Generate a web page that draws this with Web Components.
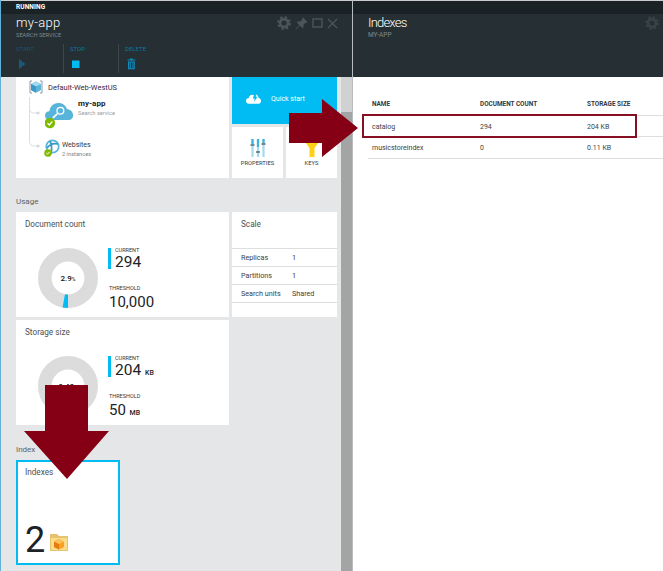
<!DOCTYPE html>
<html>
<head>
<meta charset="utf-8">
<title>my-app</title>
<style>
    html, body { margin: 0; padding: 0; background: #fff; }
    body { font-family: Roboto, "Noto Sans", sans-serif; width: 663px; height: 571px; overflow: hidden; }
</style>
</head>
<body>
<az-portal>
    <az-blade class="main" title-text="my-app" subtitle="SEARCH SERVICE" status="RUNNING" controls>
        <az-command label="START" icon="play" tone="off" first></az-command>
        <az-command label="STOP" icon="stop"></az-command>
        <az-command label="DELETE" icon="trash" last></az-command>
        <az-search-content slot="body"></az-search-content>
    </az-blade>
    <az-blade class="side" title-text="Indexes" subtitle="MY-APP" gear-only>
        <az-index-table slot="body">
            <az-index-row name="catalog" count="294" size="204 KB" selected></az-index-row>
            <az-index-row name="musicstoreindex" count="0" size="0.11 KB"></az-index-row>
        </az-index-table>
    </az-blade>
    <az-arrow dir="right"></az-arrow>
    <az-arrow dir="down"></az-arrow>
</az-portal>

<script>
const ICONS = {
    gear: `<svg width="14" height="14" viewBox="0 0 14 14"><circle cx="7" cy="7" r="3.9" fill="none" stroke="currentColor" stroke-width="2.6"/><circle cx="7" cy="7" r="5.9" fill="none" stroke="currentColor" stroke-width="2" stroke-dasharray="2.4 2.23"/></svg>`,
    pin: `<svg width="13" height="13" viewBox="0 0 13 13"><path fill="currentColor" d="M8 0.5 12.5 5 11.4 6 10.6 5.6 8.4 8 8.4 10.4 7.4 11.2 4.9 8.5 1 12.5 0.5 12 4.4 8 1.8 5.6 2.6 4.6 5 4.6 7.4 2.4 7 1.5Z"/></svg>`,
    square: `<svg width="11" height="10" viewBox="0 0 11 10"><rect x="1" y="1" width="9" height="8" fill="none" stroke="currentColor" stroke-width="1.4"/></svg>`,
    close: `<svg width="11" height="11" viewBox="0 0 11 11"><path d="M1 1 10 10M10 1 1 10" fill="none" stroke="currentColor" stroke-width="1.3"/></svg>`,
    play: `<svg width="9" height="12" viewBox="0 0 9 12"><path fill="#1b5975" d="M1 1 7.500 6 1 11Z"/></svg>`,
    stop: `<svg width="9" height="12" viewBox="0 0 9 12"><rect x="0" y="2.500" width="7.500" height="7.500" fill="#00bcf2"/></svg>`,
    trash: `<svg width="9" height="12" viewBox="0 0 9 12"><path fill="#0f8fc0" d="M0.500 1.600H3V.6H5.800V1.600H8.400V2.600H.5ZM1 3.400H7.800V11.200H1ZM2.300 4.400V10.300H3.200V4.400ZM4 4.400V10.300H4.900V4.400ZM5.600 4.400V10.300H6.500V4.400Z"/></svg>`
};

class AzPortal extends HTMLElement {
    constructor() {
        super();
        this.attachShadow({ mode: 'open' });
        this.shadowRoot.innerHTML = `
            <style>
                :host { display: flex; position: relative; width: 663px; height: 571px; overflow: hidden; }
            </style>
            <slot></slot>
        `;
    }
}

class AzBlade extends HTMLElement {
    constructor() {
        super();
        this.attachShadow({ mode: 'open' });
    }

    connectedCallback() {
        const main = this.hasAttribute('controls');
        const controls = main
            ? `<div class="controls">${ICONS.gear}${ICONS.pin}${ICONS.square}${ICONS.close}</div>`
            : `<div class="controls">${ICONS.gear}</div>`;
        this.shadowRoot.innerHTML = `
            <style>
                :host { display: flex; flex-direction: column; box-sizing: border-box; height: 571px; }
                :host(.main) { width: 353px; border-left: 1px solid #62b1d9; border-right: 1px solid #b9bcbe; background: #e4e6e8; }
                :host(.side) { flex: 1; background: #fff; }
                header { position: relative; box-sizing: border-box; height: 77px; background: #262f33; border-top: 1px solid #c9cbcc; color: #fff; flex: none; }
                .status { height: 13px; background: #1b2226; font-size: 6.5px; font-weight: 700; line-height: 13px; padding-left: 15px; letter-spacing: .1px; }
                :host(.side) .status { padding: 0; }
                .title { font-size: 13px; line-height: 16px; margin: 1px 0 0 15px; font-weight: 300; letter-spacing: .3px; }
                .sub { font-size: 5.7px; line-height: 8px; margin: 0 0 0 15px; color: #7f8a8f; }
                :host(.side) .title { font-size: 13px; letter-spacing: -.8px; }
                :host(.side) .sub { font-size: 6.5px; }
                .commands { display: flex; margin: 5px 0 0 15px; }
                .controls { position: absolute; top: 15px; right: 14px; display: flex; align-items: center; gap: 4px; color: #4b565b; }
                :host(.side) .controls { right: 4px; color: #394347; }
                main { flex: 1; min-height: 0; }
            </style>
            <header>
                <div class="status">${this.getAttribute('status') || ''}</div>
                <div class="title">${this.getAttribute('title-text')}</div>
                <div class="sub">${this.getAttribute('subtitle')}</div>
                <div class="commands"><slot></slot></div>
                ${controls}
            </header>
            <main><slot name="body"></slot></main>
        `;
    }
}

class AzCommand extends HTMLElement {
    constructor() {
        super();
        this.attachShadow({ mode: 'open' });
    }

    connectedCallback() {
        const off = this.getAttribute('tone') === 'off';
        this.shadowRoot.innerHTML = `
            <style>
                :host { display: block; box-sizing: border-box; width: 55px; height: 29px; padding-left: 6px; border-right: 1px solid #3c474c; }
                :host([first]) { width: 48px; padding-left: 0; }
                :host([last]) { border-right: 0; }
                .label { font-size: 6px; line-height: 9px; color: ${off ? '#1b5470' : '#0f77a3'}; }
                .icon { display: flex; margin-top: 5px; height: 12px; margin-left: 2px; }
            </style>
            <div class="label">${this.getAttribute('label')}</div>
            <div class="icon">${ICONS[this.getAttribute('icon')]}</div>
        `;
    }
}

class AzTile extends HTMLElement {
    constructor() {
        super();
        this.attachShadow({ mode: 'open' });
    }

    connectedCallback() {
        const heading = this.getAttribute('heading');
        this.shadowRoot.innerHTML = `
            <style>
                :host { display: flex; flex-direction: column; box-sizing: border-box; background: #fff; height: 105px; padding: 6px 0 0 9px; color: #3a4045; font-size: 8px; }
                .h { font-size: 8.2px; line-height: 12px; color: #4a5055; flex: none; }
            </style>
            ${heading ? `<div class="h">${heading}</div>` : ''}
            <slot></slot>
        `;
    }
}

class AzDonut extends HTMLElement {
    constructor() {
        super();
        this.attachShadow({ mode: 'open' });
    }

    connectedCallback() {
        const pct = parseFloat(this.getAttribute('value'));
        const a = pct / 100 * Math.PI * 2;
        const pt = r => `${(30 - Math.sin(a) * r).toFixed(2)} ${(30 + Math.cos(a) * r).toFixed(2)}`;
        const id = this.getAttribute('value').replace('.', '');
        this.shadowRoot.innerHTML = `
            <style>
                :host { display: block; position: relative; width: 60px; height: 60px; flex: none; }
                svg { display: block; }
                .pct { position: absolute; inset: 0; display: flex; align-items: center; justify-content: center; font-size: 8px; font-weight: 500; color: #111; }
                small { font-size: 5px; color: #333; margin-top: 1px; }
            </style>
            <svg width="60" height="60" viewBox="0 0 60 60">
                <defs>
                    <pattern id="h${id}" width="2" height="2" patternUnits="userSpaceOnUse" patternTransform="rotate(45)">
                        <rect width="2" height="2" fill="#d9d9d9"/><rect width="1" height="2" fill="#dedede"/>
                    </pattern>
                </defs>
                <circle cx="30" cy="30" r="23.2" fill="none" stroke="url(#h${id})" stroke-width="13.6"/>
                <path fill="#00bcf2" d="M30 60 A30 30 0 0 1 ${pt(30)} L${pt(16.5)} A16.5 16.5 0 0 0 30 46.5Z"/>
            </svg>
            <div class="pct">${this.getAttribute('value')}<small>%</small></div>
        `;
    }
}

class AzMetric extends HTMLElement {
    constructor() {
        super();
        this.attachShadow({ mode: 'open' });
    }

    connectedCallback() {
        const unit = this.getAttribute('unit');
        this.shadowRoot.innerHTML = `
            <style>
                :host { display: block; box-sizing: border-box; height: 25px; color: #1c2226; }
                :host([bar]) { border-left: 3px solid #00bcf2; height: 21px; padding-left: 4px; }
                .l { font-size: 5.5px; line-height: 5px; color: #33393d; }
                .v { font-size: 15.5px; line-height: 16px; margin-top: 1px; white-space: nowrap; }
                :host(:not([bar])) .l { padding-left: 1px; }
                :host(:not([bar])) .v { font-size: 15px; line-height: 18px; margin-top: 2px; padding-left: 1px; }
                small { font-size: 7px; font-weight: 500; }
            </style>
            <div class="l">${this.getAttribute('label')}</div>
            <div class="v">${this.getAttribute('value')}${unit ? ` <small>${unit}</small>` : ''}</div>
        `;
    }
}

class AzUsage extends HTMLElement {
    constructor() {
        super();
        this.attachShadow({ mode: 'open' });
    }

    connectedCallback() {
        this.shadowRoot.innerHTML = `
            <style>
                :host { display: block; }
                .row { display: flex; margin: 18px 0 0 13px; }
                .stats { margin-left: 10px; display: flex; flex-direction: column; gap: 17px; }
            </style>
            <div class="row">
                <az-donut value="${this.getAttribute('pct')}"></az-donut>
                <div class="stats">
                    <az-metric bar label="CURRENT" value="${this.getAttribute('current')}" unit="${this.getAttribute('current-unit') || ''}"></az-metric>
                    <az-metric label="THRESHOLD" value="${this.getAttribute('threshold')}" unit="${this.getAttribute('threshold-unit') || ''}"></az-metric>
                </div>
            </div>
        `;
    }
}

class AzScale extends HTMLElement {
    constructor() {
        super();
        this.attachShadow({ mode: 'open' });
    }

    connectedCallback() {
        const rows = [['Replicas', '1'], ['Partitions', '1'], ['Search units', 'Shared']];
        this.shadowRoot.innerHTML = `
            <style>
                :host { display: block; box-sizing: border-box; height: 105px; background: #fff; color: #3a4045; }
                .h { font-size: 8.2px; line-height: 12px; padding: 6px 0 0 9px; height: 36px; box-sizing: border-box; color: #4a5055; }
                .r { display: grid; grid-template-columns: 51px 1fr; height: 18px; box-sizing: border-box; padding-left: 9px; border-top: 1px solid #dcdee0; font-size: 7.2px; line-height: 17px; }
                .r.end { height: 15px; }
            </style>
            <div class="h">Scale</div>
            ${rows.map(r => `<div class="r"><span>${r[0]}</span><span>${r[1]}</span></div>`).join('')}
            <div class="r end"></div>
        `;
    }
}

class AzResourceTree extends HTMLElement {
    constructor() {
        super();
        this.attachShadow({ mode: 'open' });
    }

    connectedCallback() {
        this.shadowRoot.innerHTML = `
            <style>
                :host { display: block; position: relative; box-sizing: border-box; background: #fff; height: 101px; color: #33393d; }
                .group { display: flex; align-items: center; gap: 5px; padding: 3px 0 0 13px; height: 14px; font-size: 7.5px; color: #40283f; }
                .link { position: absolute; left: 13px; top: 20px; }
                .res { display: flex; position: absolute; }
                .res.app { left: 29px; top: 25px; }
                .res.web { left: 28px; top: 62px; }
                .t { font-size: 8px; line-height: 10px; }
                .app .t { font-weight: 700; color: #222; }
                .s { font-size: 5.7px; line-height: 8px; color: #9aa0a4; }
                .web .t { font-size: 7px; }
                .web .s { color: #7d858a; }
                .app .txt { margin: -3px 0 0 4px; }
                .web .txt { margin: 1px 0 0 2px; }
            </style>
            <div class="group">
                <svg width="14" height="14" viewBox="0 0 14 14">
                    <path d="M3 1H1V13H3M11 1H13V13H11" fill="none" stroke="#8d9aa3" stroke-width="1"/>
                    <path d="M7 1.500 12 4V10L7 12.700 2 10V4Z" fill="#59b4d9"/>
                    <path d="M7 1.500 12 4 7 6.500 2 4Z" fill="#a5d9ef"/>
                    <path d="M7 6.500V12.700L2 10V4Z" fill="#3999c6"/>
                </svg>
                <span>Default-Web-WestUS</span>
            </div>
            <svg class="link" width="16" height="52" viewBox="0 0 16 52">
                <path d="M.5 0V44Q.5 49 5 49H8M.5 11Q.5 16 5 16H8" fill="none" stroke="#dcdfe1" stroke-width="1"/>
                <circle cx="9" cy="16" r="1.600" fill="#d5d8da"/><circle cx="9" cy="49" r="1.600" fill="#d5d8da"/>
            </svg>
            <div class="res app">
                <svg width="29" height="29" viewBox="0 0 33 33">
                    <path fill="#59b4d9" d="M5 20.500C1.500 20.500 0 18 0 15.500 0 12.500 2 10.500 5 10.500 5.500 5 10 1 15.500 1 20 1 24 4 25 8 29 8.500 32 11.500 32 15 32 18 30 20.500 26.500 20.500Z"/>
                    <circle cx="17.500" cy="10" r="4.600" fill="#fff"/><circle cx="17.500" cy="10" r="3.100" fill="#59b4d9"/>
                    <path d="M14 13.500 9 18" stroke="#fff" stroke-width="2"/>
                    <circle cx="5.500" cy="24" r="6" fill="#7fba00"/>
                    <path d="M2.800 24 4.900 26.200 8.400 22.200" fill="none" stroke="#fff" stroke-width="1.400"/>
                </svg>
                <div class="txt"><div class="t">my-app</div><div class="s">Search service</div></div>
            </div>
            <div class="res web">
                <svg width="16" height="18" viewBox="0 0 16 18">
                    <circle cx="8.500" cy="7.500" r="6.200" fill="none" stroke="#59b4d9" stroke-width="1.800"/>
                    <path d="M3 9C6 5 10 4 14 5M6 2C8 6 8 10 7 14" fill="none" stroke="#3999c6" stroke-width="1.800"/>
                    <circle cx="4" cy="14" r="3.800" fill="#7fba00"/>
                    <path d="M2.300 14 3.500 15.200 5.700 12.800" fill="none" stroke="#fff" stroke-width="1"/>
                </svg>
                <div class="txt"><div class="t">Websites</div><div class="s">2 instances</div></div>
            </div>
        `;
    }
}

class AzPart extends HTMLElement {
    constructor() {
        super();
        this.attachShadow({ mode: 'open' });
    }

    connectedCallback() {
        this.shadowRoot.innerHTML = `
            <style>
                :host { display: flex; flex-direction: column; align-items: center; box-sizing: border-box; background: #fff; height: 51px; font-size: 5.8px; color: #33393d; padding-top: 12px; }
                .i { height: 18px; display: flex; }
                .l { line-height: 9px; margin-top: 2px; }
            </style>
            <div class="i"><slot></slot></div>
            <div class="l">${this.getAttribute('label')}</div>
        `;
    }
}

class AzSearchContent extends HTMLElement {
    constructor() {
        super();
        this.attachShadow({ mode: 'open' });
    }

    connectedCallback() {
        this.shadowRoot.innerHTML = `
            <style>
                :host { display: flex; height: 494px; overflow: hidden; }
                .scroll { flex: 1; box-sizing: border-box; padding-left: 15px; }
                .bar { width: 11px; flex: none; background: linear-gradient(#cfd1d2 0 35px, #a3a5a5 35px); }
                .grid { display: grid; grid-template-columns: 213px 105px; column-gap: 3px; row-gap: 3px; }
                .side { display: grid; grid-template-columns: 51px 51px; gap: 3px; }
                .quick { grid-column: 1 / 3; box-sizing: border-box; height: 47px; padding: 0 0 4px 14px; background: #00bcf2; color: #fff; display: flex; align-items: center; gap: 10px; font-size: 7px; }
                .label { font-size: 8px; line-height: 12px; color: #5b6266; margin: 18px 0 4px; }
                .label.index { margin-top: 19px; }
                .blank { height: 105px; }
                .indexes { box-sizing: border-box; width: 104px; height: 105px; border: 2px solid #00bcf2; padding: 4px 0 0 7px; }
                .count { display: flex; align-items: flex-end; margin-top: 43px; gap: 5px; height: 38px; }
                .num { font-size: 36px; line-height: 38px; color: #1c2226; }
                .count svg { margin-bottom: 8px; }
            </style>
            <div class="scroll">
                <div class="grid">
                    <az-resource-tree></az-resource-tree>
                    <div class="side">
                        <div class="quick">
                            <svg width="15" height="11" viewBox="0 0 15 11"><path fill="#fff" d="M3 10.800C1.200 10.800 0 9.500 0 7.800 0 6.200 1.200 5 2.800 5 3.200 3 4.600 1.800 6.400 1.800 7 1.800 7.500 2 8 2.200L6.800 5.500 8.600 5.500 8 8.800 11.600 3.800 9.800 3.800 10 1.400C11.500 2 12.500 3.300 12.700 5 14 5.300 15 6.400 15 7.900 15 9.600 13.800 10.800 12 10.800Z"/></svg>
                            <span>Quick start</span>
                        </div>
                        <az-part label="PROPERTIES">
                            <svg width="16" height="18" viewBox="0 0 16 18">
                                <path d="M2.500 0V18M8 0V18M13.500 0V18" stroke="#a5d9ef" stroke-width="2.200"/>
                                <path d="M2.500 0V5M8 0V8M13.500 0V4" stroke="#3eb3e0" stroke-width="2.200"/>
                                <path d="M0.500 6H4.500M6 13H10M11.500 5H15.500" stroke="#5d6a72" stroke-width="1.400"/>
                            </svg>
                        </az-part>
                        <az-part label="KEYS">
                            <svg width="18" height="18" viewBox="0 0 18 18"><path fill="#fcd116" d="M0 0H18L11.500 9V18H6.500V9Z"/></svg>
                        </az-part>
                    </div>
                </div>
                <div class="label">Usage</div>
                <div class="grid">
                    <az-tile heading="Document count">
                        <az-usage pct="2.9" current="294" threshold="10,000"></az-usage>
                    </az-tile>
                    <az-scale></az-scale>
                    <az-tile heading="Storage size">
                        <az-usage pct="0.40" current="204" current-unit="KB" threshold="50" threshold-unit="MB"></az-usage>
                    </az-tile>
                    <div class="blank"></div>
                </div>
                <div class="label index">Index</div>
                <az-tile class="indexes" heading="Indexes">
                    <div class="count">
                        <span class="num">2</span>
                        <svg width="18" height="17" viewBox="0 0 18 17">
                            <path fill="#e5c26d" d="M0 0H7L9 2H18V17H0Z"/>
                            <path fill="#fbdc8c" d="M1 4H17V16H1Z"/>
                            <path fill="#f7a11f" d="M9 5 14 7.500V13L9 15.500 4 13V7.500Z"/>
                            <path fill="#e97a10" d="M9 10V15.500L4 13V7.500Z"/>
                            <path fill="#fbc15a" d="M9 5 14 7.500 9 10 4 7.500Z"/>
                        </svg>
                    </div>
                </az-tile>
            </div>
            <div class="bar"></div>
        `;
    }
}

class AzIndexTable extends HTMLElement {
    constructor() {
        super();
        this.attachShadow({ mode: 'open' });
        this.shadowRoot.innerHTML = `
            <style>
                :host { display: block; padding: 15px 0 0 15px; }
                .head { display: grid; grid-template-columns: 108px 107px 1fr; height: 24px; align-items: center; padding-left: 4px; box-sizing: border-box; font-size: 6.4px; font-weight: 700; color: #33393d; border-bottom: 1px solid #dcdee0; }
            </style>
            <div class="head"><span>NAME</span><span>DOCUMENT COUNT</span><span>STORAGE SIZE</span></div>
            <slot></slot>
        `;
    }
}

class AzIndexRow extends HTMLElement {
    constructor() {
        super();
        this.attachShadow({ mode: 'open' });
    }

    connectedCallback() {
        this.shadowRoot.innerHTML = `
            <style>
                :host { display: grid; position: relative; grid-template-columns: 108px 107px 1fr; height: 22px; align-items: center; padding: 1px 0 0 4px; box-sizing: border-box; font-size: 7px; color: #3a3f45; border-bottom: 1px solid #dcdee0; }
                :host([selected]) { height: 21px; }
                :host([selected])::after { content: ""; position: absolute; left: -6px; top: -2px; width: 275px; height: 24px; box-sizing: border-box; border: 2px solid #860f24; }
            </style>
            <span>${this.getAttribute('name')}</span>
            <span>${this.getAttribute('count')}</span>
            <span>${this.getAttribute('size')}</span>
        `;
    }
}

class AzArrow extends HTMLElement {
    constructor() {
        super();
        this.attachShadow({ mode: 'open' });
    }

    connectedCallback() {
        const right = this.getAttribute('dir') === 'right';
        // both arrows lie over the blades, so they are placed on the portal
        const shape = right
            ? { x: 289, y: 99, w: 69, h: 58, pts: '0,14 33,14 33,0 69,29 33,58 33,44 0,44' }
            : { x: 24, y: 385, w: 85, h: 94, pts: '21,0 64,0 64,46 85,46 43,94 0,46 21,46' };
        this.shadowRoot.innerHTML = `
            <style>
                :host { position: absolute; left: ${shape.x}px; top: ${shape.y}px; width: ${shape.w}px; height: ${shape.h}px; }
                svg { display: block; }
            </style>
            <svg width="${shape.w}" height="${shape.h}" viewBox="0 0 ${shape.w} ${shape.h}"><polygon points="${shape.pts}" fill="#860015"/></svg>
        `;
    }
}

customElements.define('az-portal', AzPortal);
customElements.define('az-blade', AzBlade);
customElements.define('az-command', AzCommand);
customElements.define('az-tile', AzTile);
customElements.define('az-donut', AzDonut);
customElements.define('az-metric', AzMetric);
customElements.define('az-usage', AzUsage);
customElements.define('az-scale', AzScale);
customElements.define('az-resource-tree', AzResourceTree);
customElements.define('az-part', AzPart);
customElements.define('az-search-content', AzSearchContent);
customElements.define('az-index-table', AzIndexTable);
customElements.define('az-index-row', AzIndexRow);
customElements.define('az-arrow', AzArrow);
</script>
</body>
</html>
